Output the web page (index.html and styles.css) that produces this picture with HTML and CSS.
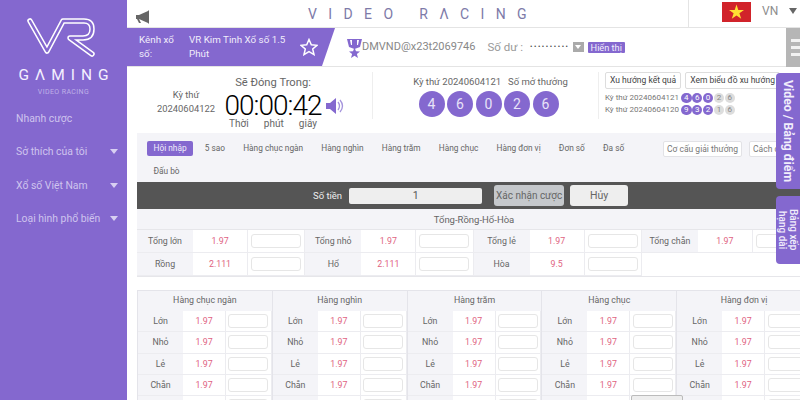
FILE: index.html
```html
<!DOCTYPE html>
<html lang="vi">
<head>
<meta charset="utf-8">
<title>VR Gaming</title>
<link rel="stylesheet" href="styles.css">
</head>
<body>
<div class="page">
  <aside class="side">
    <div class="logo">
      <svg class="logo-mark" width="127" height="66" viewBox="0 0 127 66">
        <path class="lm-o" d="M30 21 L47 51 L63 21 L84 21 Q92 21 92 29 Q92 38 83 38 L70 38 L92 54"/>
        <path class="lm-i" d="M30 21 L47 51 L63 21 L84 21 Q92 21 92 29 Q92 38 83 38 L70 38 L92 54"/>
      </svg>
      <div class="logo-name">GΛMING</div>
      <div class="logo-sub">VIDEO RACING</div>
    </div>
    <nav class="menu">
      <div class="menu-item">Nhanh cược</div>
      <div class="menu-item">Sở thích của tôi<i class="menu-caret"></i></div>
      <div class="menu-item">Xổ số Việt Nam<i class="menu-caret"></i></div>
      <div class="menu-item">Loại hình phổ biến<i class="menu-caret"></i></div>
    </nav>
  </aside>

  <main class="main">
    <header class="top">
      <svg class="horn" width="14" height="14" viewBox="0 0 14 14"><path d="M0 5 L3 5 L12 1 L13 0 L13 14 L12 13 L3 9 L3 9 L5 13 L3 13 L1 9 L0 9 Z"/></svg>
      <div class="brand">VIDEO RΛCING</div>
      <div class="lang">
        <svg class="flag" width="29" height="20" viewBox="0 0 29 20"><rect width="29" height="20" fill="#d1232a"/><polygon fill="#ffe033" points="14.500,2.500 16.300,8 22,8 17.400,11.300 19.200,16.800 14.500,13.400 9.800,16.800 11.600,11.300 7,8 12.700,8"/></svg>
        <span class="lang-code">VN</span>
        <i class="lang-caret"></i>
      </div>
    </header>

    <section class="bar">
      <div class="channel">
        <div class="channel-label">Kênh xổ số:</div>
        <div class="channel-name">VR Kim Tinh Xổ số 1.5 Phút</div>
        <svg class="star" width="18" height="18" viewBox="0 0 18 18"><polygon points="9,1.500 11.300,6.700 17,7.300 12.700,11 14,16.600 9,13.700 4,16.600 5.300,11 1,7.300 6.700,6.700"/></svg>
      </div>
      <div class="user">
        <svg class="rank" width="15" height="19" viewBox="0 0 15 19"><path d="M0 0 H15 L13 8 L7.500 10 L2 8 Z M3 1 L4 6 H5 V1 Z M10 1 V6 H11 L12 1 Z"/><polygon points="7.500,8.500 9,12.300 13,12.500 9.900,15 11,19 7.500,16.700 4,19 5.100,15 2,12.500 6,12.300"/></svg>
        <span class="user-name">DMVND@x23t2069746</span>
        <span class="balance-label">Số dư :</span>
        <span class="dots">••••••••••</span>
        <span class="drop"><i></i></span>
        <span class="show">Hiển thị</span>
      </div>
      <div class="ham"><i></i><i></i><i></i></div>
    </section>

    <section class="draw">
      <div class="draw-now">
        <div class="period">Kỳ thứ<br>20240604122</div>
        <div class="clock">
          <div class="clock-title">Sẽ Đóng Trong:</div>
          <div class="clock-time">00:00:42</div>
          <div class="clock-units"><span>Thời</span><span>phút</span><span>giây</span></div>
        </div>
        <svg class="speaker" width="20" height="20" viewBox="0 0 20 20"><path class="sp-f" d="M1 7 H5 L11 2 V18 L5 13 H1 Z"/><path class="sp-s" d="M13 6 Q16 10 13 14 M15 4 Q20 10 15 16"/></svg>
      </div>
      <div class="draw-last">
        <div class="last-title"><span>Kỳ thứ 20240604121</span><span>Số mở thưởng</span></div>
        <div class="balls"><b>4</b><b>6</b><b>0</b><b>2</b><b>6</b></div>
      </div>
      <div class="draw-trend">
        <div class="trend-btns"><span>Xu hướng kết quả</span><span>Xem biểu đồ xu hướng</span></div>
        <div class="trend-row">Kỳ thứ 20240604121 <b>4</b><b>6</b><b>0</b><em>2</em><em>6</em></div>
        <div class="trend-row">Kỳ thứ 20240604120 <b>9</b><b>3</b><b>2</b><em>1</em><em>6</em></div>
      </div>
    </section>

    <section class="tabs">
      <div class="tab-list">
        <span class="tab tab-on">Hội nhập</span>
        <span class="tab">5 sao</span>
        <span class="tab">Hàng chục ngàn</span>
        <span class="tab">Hàng nghìn</span>
        <span class="tab">Hàng trăm</span>
        <span class="tab">Hàng chục</span>
        <span class="tab">Hàng đơn vị</span>
        <span class="tab">Đơn số</span>
        <span class="tab">Đa số</span>
        <span class="tab">Đấu bò</span>
      </div>
      <div class="tab-tools"><span>Cơ cấu giải thưởng</span><span>Cách chơi</span></div>
    </section>

    <section class="bet">
      <span class="bet-label">Số tiền</span>
      <span class="bet-input">1</span>
      <span class="bet-ok">Xác nhận cược</span>
      <span class="bet-cancel">Hủy</span>
    </section>

    <section class="sum">
      <div class="sum-title">Tổng-Rồng-Hổ-Hòa</div>
      <div class="sum-grid">
        <div class="lb">Tổng lớn</div><div class="od">1.97</div><div class="ip"><i></i></div>
        <div class="lb">Tổng nhỏ</div><div class="od">1.97</div><div class="ip"><i></i></div>
        <div class="lb">Tổng lẻ</div><div class="od">1.97</div><div class="ip"><i></i></div>
        <div class="lb">Tổng chẵn</div><div class="od">1.97</div><div class="ip"><i></i></div>
        <div class="lb">Rồng</div><div class="od">2.111</div><div class="ip"><i></i></div>
        <div class="lb">Hổ</div><div class="od">2.111</div><div class="ip"><i></i></div>
        <div class="lb">Hòa</div><div class="od">9.5</div><div class="ip"><i></i></div>
      </div>
    </section>

    <section class="pos">
      <div class="pos-col">
        <div class="pos-head">Hàng chục ngàn</div>
        <div class="lb">Lớn</div><div class="od">1.97</div><div class="ip"><i></i></div>
        <div class="lb">Nhỏ</div><div class="od">1.97</div><div class="ip"><i></i></div>
        <div class="lb">Lẻ</div><div class="od">1.97</div><div class="ip"><i></i></div>
        <div class="lb">Chẵn</div><div class="od">1.97</div><div class="ip"><i></i></div>
        <div class="lb"><u></u></div><div class="od"></div><div class="ip"><i></i></div>
      </div>
      <div class="pos-col">
        <div class="pos-head">Hàng nghìn</div>
        <div class="lb">Lớn</div><div class="od">1.97</div><div class="ip"><i></i></div>
        <div class="lb">Nhỏ</div><div class="od">1.97</div><div class="ip"><i></i></div>
        <div class="lb">Lẻ</div><div class="od">1.97</div><div class="ip"><i></i></div>
        <div class="lb">Chẵn</div><div class="od">1.97</div><div class="ip"><i></i></div>
        <div class="lb"><u></u></div><div class="od"></div><div class="ip"><i></i></div>
      </div>
      <div class="pos-col">
        <div class="pos-head">Hàng trăm</div>
        <div class="lb">Lớn</div><div class="od">1.97</div><div class="ip"><i></i></div>
        <div class="lb">Nhỏ</div><div class="od">1.97</div><div class="ip"><i></i></div>
        <div class="lb">Lẻ</div><div class="od">1.97</div><div class="ip"><i></i></div>
        <div class="lb">Chẵn</div><div class="od">1.97</div><div class="ip"><i></i></div>
        <div class="lb"><u></u></div><div class="od"></div><div class="ip"><i></i></div>
      </div>
      <div class="pos-col">
        <div class="pos-head">Hàng chục</div>
        <div class="lb">Lớn</div><div class="od">1.97</div><div class="ip"><i></i></div>
        <div class="lb">Nhỏ</div><div class="od">1.97</div><div class="ip"><i></i></div>
        <div class="lb">Lẻ</div><div class="od">1.97</div><div class="ip"><i></i></div>
        <div class="lb">Chẵn</div><div class="od">1.97</div><div class="ip"><i></i></div>
        <div class="lb"><u></u></div><div class="od"></div><div class="ip"><i></i></div>
      </div>
      <div class="pos-col">
        <div class="pos-head">Hàng đơn vị</div>
        <div class="lb">Lớn</div><div class="od">1.97</div><div class="ip"><i></i></div>
        <div class="lb">Nhỏ</div><div class="od">1.97</div><div class="ip"><i></i></div>
        <div class="lb">Lẻ</div><div class="od">1.97</div><div class="ip"><i></i></div>
        <div class="lb">Chẵn</div><div class="od">1.97</div><div class="ip"><i></i></div>
        <div class="lb"><u></u></div><div class="od"></div><div class="ip"><i></i></div>
      </div>
    </section>
  </main>

  <div class="side-tab side-tab-video">Video / Bảng điểm</div>
  <div class="side-tab side-tab-rank">Bảng xếp<br>hạng dài</div>
  <div class="float-box"></div>
</div>
</body>
</html>
```

FILE: styles.css
```css
* { box-sizing: border-box; }
html, body { margin: 0; padding: 0; }
body { width: 800px; height: 400px; overflow: hidden; background: #fff; font-family: Roboto, "Noto Sans", sans-serif; color: #555; }
i, em, b, u { font-style: normal; text-decoration: none; }
.page { position: relative; display: flex; width: 800px; height: 400px; overflow: hidden; }

.side { flex: 0 0 127px; width: 127px; min-width: 0; background: #8468cf; color: #cfc4ee; }
.logo { height: 102px; display: flex; flex-direction: column; align-items: center; }
.logo-mark { display: block; flex: 0 0 66px; }
.lm-o, .lm-i { fill: none; stroke-linejoin: round; stroke-linecap: round; }
.lm-o { stroke: #fff; stroke-width: 5.500; }
.lm-i { stroke: #8468cf; stroke-width: 2.500; }
.logo-name { color: #f4f0ff; font-size: 15.500px; line-height: 18px; letter-spacing: 6px; margin-right: -6px; }
.logo-sub { color: #bfb1e8; font-size: 7px; line-height: 12px; margin-top: 2px; letter-spacing: .4px; }
.menu { padding-left: 16px; }
.menu-item { display: flex; align-items: center; height: 33.300px; font-size: 10.400px; white-space: nowrap; }
.menu-caret { margin-left: auto; margin-right: 9px; border: 4px solid transparent; border-top: 5px solid #d8cff2; border-bottom: 0; }

.main { flex: 1 1 0; min-width: 0; overflow: hidden; }
.top { height: 28px; display: flex; align-items: center; position: relative; border-bottom: 1px solid #e4e4e4; }
.horn { margin: 6px 0 0 9px; fill: #666; }
.brand { position: absolute; left: 181px; top: 4px; font-size: 14px; line-height: 20px; letter-spacing: 11.400px; color: #7d7aa8; white-space: nowrap; }
.lang { margin-left: auto; width: 112px; height: 28px; border-left: 1px solid #e4e4e4; display: flex; align-items: center; padding-left: 33px; }
.flag { flex: none; margin-top: -4px; }
.lang-code { font-size: 12px; color: #8d8d8d; margin-left: 11px; margin-top: -5px; }
.lang-caret { margin-left: 11px; margin-top: -5px; border: 4px solid transparent; border-top: 6px solid #666; border-bottom: 0; }

.bar { height: 39px; display: flex; align-items: center; border-bottom: 1px solid #e4e4e4; position: relative; }
.channel { width: 208px; height: 38px; background: #8468cf; color: #f1edfb; display: flex; align-items: center; padding-left: 12px; clip-path: polygon(0 0, 100% 0, 195px 100%, 0 100%); font-size: 9.800px; line-height: 14px; flex: none; }
.channel-label { width: 50px; padding-right: 10px; }
.channel-name { width: 100px; }
.star { flex: none; margin-left: 11px; fill: none; stroke: #fff; stroke-width: 1.500; }
.user { display: flex; align-items: center; font-size: 12px; margin-left: 12px; color: #8a8a8a; white-space: nowrap; }
.rank { fill: #8468cf; flex: none; margin-top: 3px; }
.user-name { color: #888; margin-top: -2px; font-size: 11px; }
.balance-label { margin-left: 12px; color: #999; font-size: 11.500px; }
.dots { font-size: 7px; letter-spacing: 1.600px; color: #444; margin-left: 7px; }
.drop { width: 11px; height: 10px; background: #aaa; margin-left: 3px; display: flex; align-items: center; justify-content: center; }
.drop i { border: 3px solid transparent; border-top: 4px solid #fff; border-bottom: 0; }
.show { background: #8468cf; color: #f1edfb; font-size: 9.200px; line-height: 11px; padding: 0 3px; margin-left: 4px; border-radius: 1px; }
.ham { position: absolute; right: 0; top: 0; width: 14px; height: 39px; background: #b6b6b6; display: flex; flex-direction: column; justify-content: center; gap: 4px; align-items: flex-end; }
.ham i { width: 9px; height: 3px; background: #f2f2f2; }

.draw { height: 66px; display: flex; align-items: flex-start; }
.draw-now { flex: 0 0 246px; height: 47px; margin-top: 5px; display: flex; align-items: flex-start; padding-left: 30px; border-right: 1px solid #eee; }
.period { width: 58px; margin-top: 16px; text-align: center; font-size: 9.400px; line-height: 14px; color: #666; }
.clock { width: 100px; margin: 4px 0 0 8px; text-align: center; }
.clock-title { font-size: 11.200px; line-height: 14px; color: #666; }
.clock-time { font-size: 28px; font-weight: 300; line-height: 25px; margin-top: 3px; color: #000; white-space: nowrap; letter-spacing: -1px; }
.clock-units { display: flex; justify-content: space-between; font-size: 10px; line-height: 12px; padding: 0 6px; color: #666; }
.speaker { flex: none; margin: 24px 0 0 2px; }
.sp-f { fill: #8468cf; }
.sp-s { fill: none; stroke: #a493dc; stroke-width: 1.300; }
.draw-last { flex: 0 0 226px; height: 47px; margin-top: 5px; padding-left: 6px; border-right: 1px solid #eee; display: flex; flex-direction: column; align-items: center; }
.last-title { font-size: 9.500px; line-height: 15px; color: #666; display: flex; gap: 7px; margin: 2px 0 0 4px; white-space: nowrap; }
.balls { display: flex; gap: 2.500px; margin-top: 2px; }
.balls b { width: 26px; height: 26px; border-radius: 50%; background: #8468cf; color: #e8e2f8; font-weight: 400; font-size: 14px; display: flex; align-items: center; justify-content: center; }
.draw-trend { flex: 1 1 0; min-width: 0; padding: 5px 0 0 6px; }
.trend-btns { display: flex; gap: 4px; white-space: nowrap; margin-bottom: 3px; }
.trend-btns span { border: 1px solid #ddd; border-radius: 2px; font-size: 8.500px; line-height: 15px; padding: 0 4px; color: #444; }
.trend-row { display: flex; align-items: center; font-size: 8px; line-height: 12px; color: #777; white-space: pre; }
.trend-row b, .trend-row em { width: 10.500px; height: 10.500px; margin-right: .4px; border-radius: 50%; font-size: 8px; display: flex; align-items: center; justify-content: center; font-weight: 400; }
.trend-row b { background: #8468cf; color: #fff; }
.trend-row em { background: #ddd; color: #888; }

.tabs { height: 49px; margin-left: 10px; background: #f4f4f8; display: flex; padding: 8px 0 0 10px; }
.tab-list { width: 500px; display: flex; flex-wrap: wrap; align-content: flex-start; gap: 8px 5.200px; flex: none; }
.tab { font-size: 8.300px; line-height: 15px; height: 15px; padding: 0 6.500px; color: #666; white-space: nowrap; }
.tab-on { background: #8468cf; color: #f1edfb; border-radius: 2px; }
.tab-tools { display: flex; gap: 7px; margin-left: 16px; white-space: nowrap; }
.tab-tools span { height: 16px; background: #fff; border: 1px solid #e2e2e6; border-radius: 2px; font-size: 8.500px; line-height: 14px; padding: 0 3px; color: #777; }

.bet { height: 27px; margin-left: 10px; background: #555; display: flex; align-items: center; padding-left: 176px; }
.bet-label { font-size: 9.500px; color: #eee; margin-right: -1px; }
.bet-input { width: 133px; height: 16px; background: #eee; border-radius: 2px; margin-left: 8px; font-size: 10.500px; line-height: 16px; text-align: center; color: #555; }
.bet-ok { width: 70px; height: 21px; margin-left: 12px; background: #c5c8cc; border-radius: 3px; font-size: 10px; line-height: 21px; text-align: center; color: #666; white-space: nowrap; }
.bet-cancel { width: 58px; height: 21px; margin-left: 6px; background: #eee; border-radius: 3px; font-size: 10.500px; line-height: 21px; text-align: center; color: #666; }

.sum { margin-left: 10px; width: 674px; }
.sum-title { height: 21px; background: #f4f4f8; border-bottom: 1px solid #e6e6ea; font-size: 9.500px; line-height: 21px; text-align: center; color: #666; }
.sum-grid { display: grid; grid-template-columns: repeat(4, 56px 55px 57.300px); grid-auto-rows: 23px; border-bottom: 1px solid #e6e6ea; }
.lb { background: #f4f4f8; display: flex; align-items: center; justify-content: center; font-size: 8.800px; color: #666; border-bottom: 1px solid #ececf0; overflow: hidden; }
.od { display: flex; align-items: center; justify-content: center; font-size: 8.800px; color: #e0637f; border-right: 1px solid #ececf0; border-bottom: 1px solid #ececf0; }
.ip { display: flex; align-items: center; justify-content: center; border-right: 1px solid #ececf0; border-bottom: 1px solid #ececf0; }
.ip i { display: block; width: 50px; height: 14px; background: #fff; border: 1px solid #e6e6e6; border-radius: 3px; }

.pos { margin: 13px 0 0 10px; display: flex; width: 674px; }
.pos-col { flex: 0 0 134.800px; min-width: 0; display: grid; grid-template-columns: 45px 43px 45.800px; grid-template-rows: 20px; grid-auto-rows: 21.300px; border-left: 1px solid #e4e4ea; border-top: 1px solid #e4e4ea; }
.pos-head { grid-column: 1 / -1; background: #f4f4f8; font-size: 8.800px; line-height: 19px; text-align: center; color: #666; }
.pos-col .ip i { width: 40px; height: 14px; }
.lb u { display: block; width: 18px; height: 18px; border-radius: 50%; background: #fff; margin-top: 17px; }

.side-tab { position: absolute; right: 0; width: 24px; background: #8468cf; color: #f1edfb; writing-mode: vertical-rl; text-align: center; border-radius: 4px 0 0 4px; white-space: nowrap; }
.side-tab-video { top: 73px; height: 116px; font-size: 12.300px; line-height: 24px; font-weight: 700; }
.side-tab-rank { top: 196px; height: 68px; font-size: 10px; line-height: 11px; padding: 0 1px; font-weight: 500; }
.float-box { position: absolute; left: 631px; top: 395px; width: 52px; height: 30px; background: #eee; border: 1px solid #bbb; border-radius: 2px; }
```
